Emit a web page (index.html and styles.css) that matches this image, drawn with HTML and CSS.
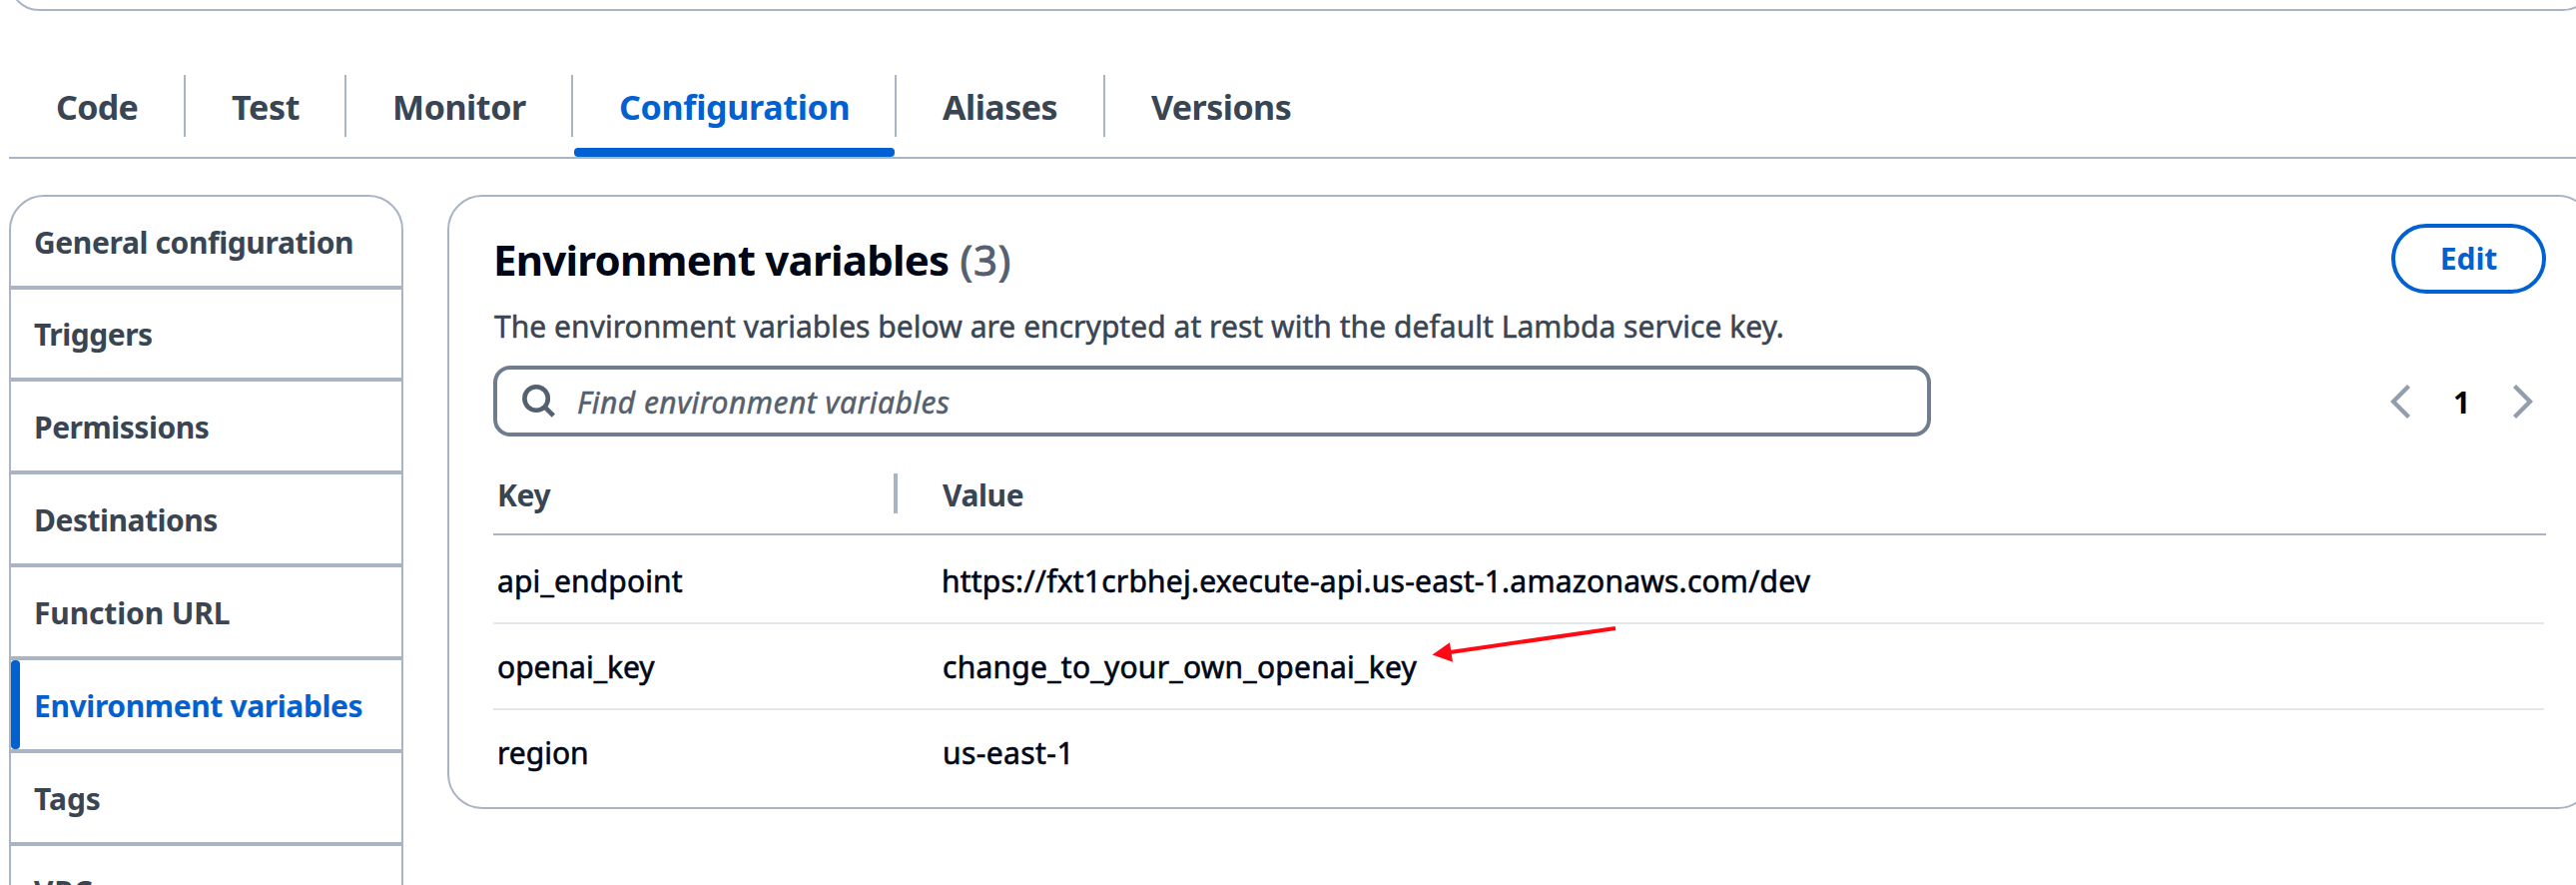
FILE: index.html
```html
<!DOCTYPE html>
<html lang="en">
<head>
<meta charset="utf-8">
<title>Lambda function configuration</title>
<link rel="stylesheet" href="styles.css">
</head>
<body>
<div class="overview"></div>
<nav class="tabs">
  <a class="tab tab-code">Code</a><i class="sep"></i>
  <a class="tab tab-test">Test</a><i class="sep"></i>
  <a class="tab tab-monitor">Monitor</a><i class="sep"></i>
  <a class="tab tab-config active">Configuration</a><i class="sep"></i>
  <a class="tab tab-aliases">Aliases</a><i class="sep"></i>
  <a class="tab tab-versions">Versions</a>
</nav>
<main class="content">
  <aside class="side">
    <a class="item general">General configuration</a>
    <a class="item triggers">Triggers</a>
    <a class="item permissions">Permissions</a>
    <a class="item permissions">Destinations</a>
    <a class="item url">Function URL</a>
    <a class="item current">Environment variables</a>
    <a class="item tags">Tags</a>
    <a class="item vpc">VPC</a>
  </aside>
  <section class="panel">
    <header class="head">
      <h2 class="title">Environment variables <span class="count">(3)</span></h2>
      <button class="edit">Edit</button>
    </header>
    <p class="desc">The environment variables below are encrypted at rest with the default Lambda service key.</p>
    <div class="tools">
      <div class="search">
        <svg class="glass" width="34" height="34" viewBox="0 0 34 34"><circle cx="14.1" cy="14" r="11.7"/><path d="M22.5 22.4 31.3 31.2"/></svg>
        <span class="placeholder">Find environment variables</span>
      </div>
      <div class="pager">
        <svg class="chev" width="20" height="36" viewBox="0 0 20 36"><path d="M18.5 2.5 3 18 18.5 33.5"/></svg>
        <span class="page">1</span>
        <svg class="chev" width="20" height="36" viewBox="0 0 20 36"><path d="M1.5 2.5 17 18 1.5 33.5"/></svg>
      </div>
    </div>
    <div class="table">
      <div class="row thead"><div class="key">Key<i class="grip"></i></div><div class="value">Value</div></div>
      <div class="row first"><div class="key">api_endpoint</div><div class="value link">https://fxt1crbhej.execute-api.us-east-1.amazonaws.com/dev</div></div>
      <div class="row"><div class="key">openai_key</div><div class="value secret">change_to_your_own_openai_key</div></div>
      <div class="row last"><div class="key">region</div><div class="value region">us-east-1</div></div>
    </div>
    <svg class="arrow" width="190" height="40" viewBox="0 0 190 40"><path class="shaft" d="M184 5 15 29.5"/><path class="tip" d="M0.5 31.6 18 19.3 21 38.8Z"/></svg>
  </section>
</main>
</body>
</html>
```

FILE: styles.css
```css
*{box-sizing:border-box}
html,body{height:886px;overflow:hidden}
body{margin:0;background:#fff;color:#000716;font-family:"Noto Sans","Open Sans",sans-serif;font-size:30px}
.overview{height:60px;width:2588px;margin:-49px 0 0 9px;border:2px solid #aab5c3;border-radius:35px}

.tabs{display:flex;height:148px;width:2580px;margin-left:9px;padding-top:64px;border-bottom:2px solid #aab5c3}
.tab{position:relative;padding-left:47px;font-size:34px;line-height:64px;font-weight:700;color:#394553;white-space:nowrap}
.sep{width:2px;height:62px;background:#aab5c3}
.tab-code{width:175px;padding-left:47px;letter-spacing:-.7px}
.tab-test{width:159px;padding-left:46px;letter-spacing:-.3px}
.tab-monitor{width:225px;padding-left:46px;letter-spacing:-.43px}
.tab-config{width:322px;padding-left:46px;letter-spacing:-.3px}
.tab-aliases{width:207px;padding-left:46px;letter-spacing:-.5px}
.tab-versions{width:240px;padding-left:46px;letter-spacing:-.55px}
.active{color:#0161d0}
.active::after{content:"";position:absolute;left:1px;right:0;bottom:0;height:9px;border-radius:4px;background:#0161d0}

.content{display:flex;width:2620px;padding:36px 0 0 9px}
.side{display:flex;flex-direction:column;width:395px;height:720px;border:2px solid #aab5c3;border-radius:35px 35px 0 0;overflow:hidden}
.item{position:relative;flex:none;height:93px;padding-left:23px;border-bottom:4px solid #aab5c3;line-height:91px;font-weight:700;color:#394553;letter-spacing:-.48px;white-space:nowrap}
.general{letter-spacing:-.39px}
.triggers{height:92px;line-height:89px}
.url{letter-spacing:-.15px}
.tags{letter-spacing:0}
.vpc{letter-spacing:.7px}
.current{color:#0161d0;letter-spacing:-.38px}
.current::before{content:"";position:absolute;left:0;top:0;width:9px;height:89px;border-radius:4px;background:#0161d0}

.panel{position:relative;width:2149px;height:615px;margin-left:44px;padding:27px 45px 0 44px;border:2px solid #aab5c3;border-radius:35px}
.head{display:flex;justify-content:space-between;height:70px}
.title{margin:0;font-size:42px;line-height:71px;font-weight:700;letter-spacing:-.75px;white-space:nowrap}
.count{font-weight:400;color:#545f6f;letter-spacing:.8px;margin-left:1px;-webkit-text-stroke:.9px #545f6f}
.edit{width:155px;height:70px;padding:0;border:4px solid #0161d0;border-radius:35px;background:#fff;color:#0161d0;font:700 30px/62px "Noto Sans",sans-serif}
.desc{margin:13px 0 19px;padding-left:1px;line-height:40px;color:#394553;letter-spacing:.04px;white-space:nowrap;-webkit-text-stroke:.5px #394553}
.tools{display:flex;justify-content:space-between}
.search{display:flex;align-items:center;gap:21px;width:1440px;height:71px;padding-left:25px;border:4px solid #707d8f;border-radius:17px}
.glass{fill:none;stroke:#545f6f;stroke-width:4.6}
.placeholder{padding-top:2px;font-style:italic;color:#545f6f;letter-spacing:.46px;-webkit-text-stroke:.5px #545f6f}
.pager{display:flex;align-items:center;width:156px;padding-right:13px;justify-content:space-between}
.chev{fill:none;stroke:#929eae;stroke-width:4.4}
.page{padding-top:1px;font-weight:700}

.row{display:grid;grid-template-columns:405px 1fr;height:86px;margin-right:2px;border-bottom:2px solid #e4e8ec;line-height:85px;white-space:nowrap;-webkit-text-stroke:.6px #000716}
.thead{height:99px;margin-right:0;padding-top:20px;border-color:#aab5c3;line-height:77px;font-weight:700;color:#394553;letter-spacing:-.4px;-webkit-text-stroke:0}
.first{height:89px;line-height:91px}
.last{border:0}
.key{display:flex;justify-content:space-between;padding-left:4px}
.value{padding-left:45px}
.first .key{letter-spacing:.15px}
.grip{width:4px;height:40px;margin-top:17px;background:#aab5c3}
.link{padding-left:44px;letter-spacing:.22px}
.secret{letter-spacing:.26px}
.region{letter-spacing:.4px}

/* annotation drawn over the table */
.arrow{position:absolute;left:984px;top:427px}
.shaft{fill:none;stroke:#ff0a14;stroke-width:4}
.tip{fill:#ff0a14}
```
